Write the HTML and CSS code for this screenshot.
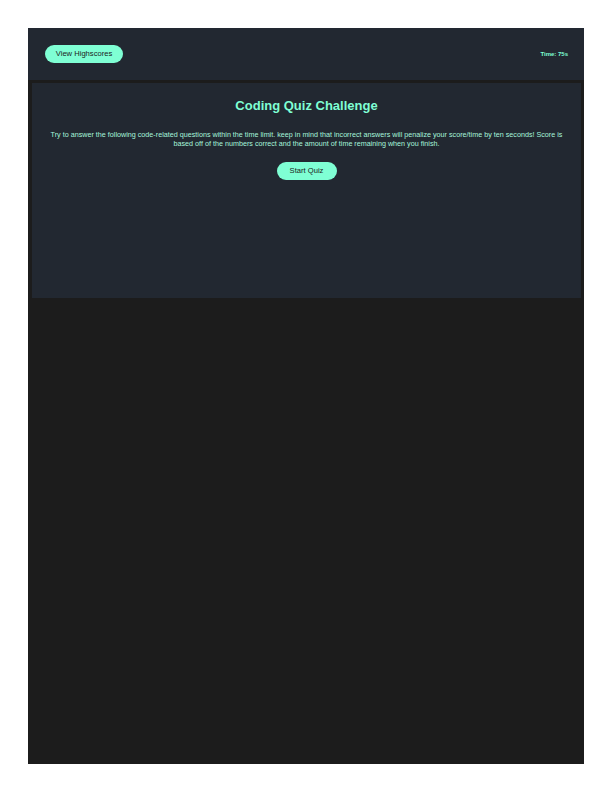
FILE: index.html
```html
<!DOCTYPE html>
<html lang="en">
<head>
<meta charset="utf-8">
<title>Coding Quiz Challenge</title>
<link rel="stylesheet" href="styles.css">
</head>
<body>
<div class="page">
  <header class="topbar">
    <button class="pill">View Highscores</button>
    <span class="timer">Time: 75s</span>
  </header>
  <main class="card">
    <h1 class="title">Coding Quiz Challenge</h1>
    <p class="intro">Try to answer the following code-related questions within the time limit. keep in mind that incorrect answers will penalize your score/time by ten seconds! Score is based off of the numbers correct and the amount of time remaining when you finish.</p>
    <button class="pill start">Start Quiz</button>
  </main>
</div>
</body>
</html>
```

FILE: styles.css
```css
html, body {
  margin: 0;
  padding: 0;
  background: #ffffff;
}
body {
  font-family: "Liberation Sans", Arial, Helvetica, sans-serif;
}
.page {
  margin: 28px;
  height: 736px;
  background: #1c1c1c;
  display: flex;
  flex-direction: column;
}
.topbar {
  height: 52px;
  background: #222831;
  display: flex;
  align-items: center;
  justify-content: space-between;
  padding: 0 16px 0 17px;
  box-sizing: border-box;
  flex: none;
}
.pill {
  background: #7fffd4;
  color: #1c1c1c;
  border: none;
  border-radius: 10px;
  font-family: "Liberation Sans", Arial, Helvetica, sans-serif;
  font-size: 7.6px;
  height: 18px;
  width: 78px;
  padding: 0;
  line-height: 18px;
}
.timer {
  color: #7fffd4;
  font-size: 6px;
  font-weight: bold;
  margin-top: -1px;
}
.card {
  margin: 3px 3px 0 4px;
  height: 215px;
  background: #222831;
  box-sizing: border-box;
  padding-top: 15px;
  display: flex;
  flex-direction: column;
  align-items: center;
  text-align: center;
}
.title {
  margin: 0;
  color: #7fffd4;
  font-size: 13px;
  line-height: 16px;
  font-weight: bold;
}
.intro {
  margin: 16px 13px 0;
  color: #a6f5dc;
  font-size: 7.2px;
  line-height: 9.3px;
}
.start {
  width: 60px;
  margin-top: 13px;
}
```
